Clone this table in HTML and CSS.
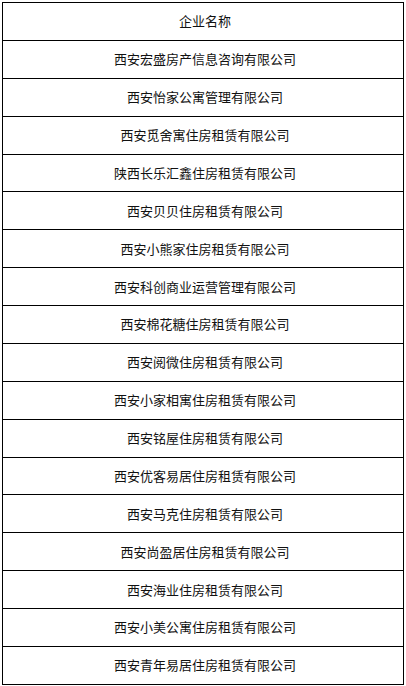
FILE: index.html
```html
<!DOCTYPE html>
<html lang="zh-CN">
<head>
<meta charset="utf-8">
<title>企业名称</title>
<link rel="stylesheet" href="styles.css">
</head>
<body>
<table class="company-table">
  <thead>
    <tr><th>企业名称</th></tr>
  </thead>
  <tbody>
    <tr><td>西安宏盛房产信息咨询有限公司</td></tr>
    <tr><td>西安怡家公寓管理有限公司</td></tr>
    <tr><td>西安觅舍寓住房租赁有限公司</td></tr>
    <tr><td>陕西长乐汇鑫住房租赁有限公司</td></tr>
    <tr><td>西安贝贝住房租赁有限公司</td></tr>
    <tr><td>西安小熊家住房租赁有限公司</td></tr>
    <tr><td>西安科创商业运营管理有限公司</td></tr>
    <tr><td>西安棉花糖住房租赁有限公司</td></tr>
    <tr><td>西安阅微住房租赁有限公司</td></tr>
    <tr><td>西安小家相寓住房租赁有限公司</td></tr>
    <tr><td>西安铭屋住房租赁有限公司</td></tr>
    <tr><td>西安优客易居住房租赁有限公司</td></tr>
    <tr><td>西安马克住房租赁有限公司</td></tr>
    <tr><td>西安尚盈居住房租赁有限公司</td></tr>
    <tr><td>西安海业住房租赁有限公司</td></tr>
    <tr><td>西安小美公寓住房租赁有限公司</td></tr>
    <tr><td>西安青年易居住房租赁有限公司</td></tr>
  </tbody>
</table>
</body>
</html>
```

FILE: styles.css
```css
html, body {
  margin: 0;
  padding: 0;
  background: #fff;
}

body {
  padding: 2px 0 0 2px;
  font-family: "Noto Sans CJK SC", "Microsoft YaHei", sans-serif;
  font-size: 13px;
  color: #111;
}

.company-table {
  border-collapse: collapse;
  width: 402px;
  table-layout: fixed;
}

.company-table th,
.company-table td {
  border: 1px solid #000;
  height: 37.89px;
  padding: 0 0 0 4px;
  box-sizing: border-box;
  text-align: center;
  vertical-align: middle;
  font-weight: normal;
  line-height: 16px;
  white-space: nowrap;
}
```
